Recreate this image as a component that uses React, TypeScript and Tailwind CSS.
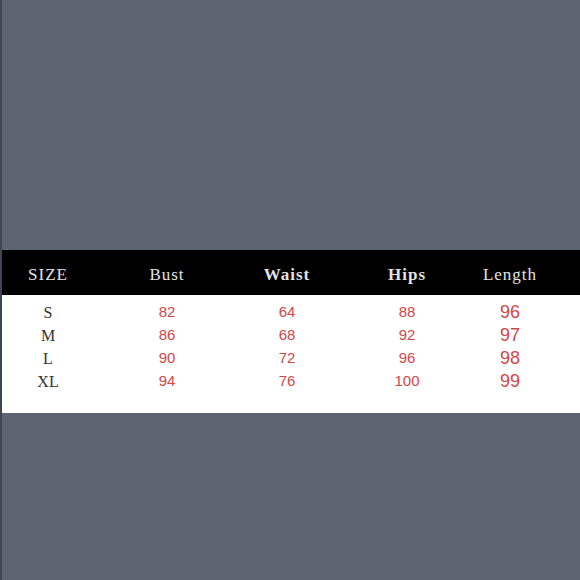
const heads = [
  { label: "SIZE", bold: false },
  { label: "Bust", bold: false },
  { label: "Waist", bold: true },
  { label: "Hips", bold: true },
  { label: "Length", bold: false },
];

const rows = [
  ["S", "82", "64", "88", "96"],
  ["M", "86", "68", "92", "97"],
  ["L", "90", "72", "96", "98"],
  ["XL", "94", "76", "100", "99"],
];

const cols = "grid grid-cols-[92px_146px_94px_146px_60px]";

export default function App() {
  return (
    <div className="w-[580px] h-[580px] bg-[#5b6470] flex flex-col border-l-2 border-[#3d4752]">
      <div className="h-[250px]" />
      <div className={`${cols} h-[45px] bg-black items-center pt-[5px] text-[17px] tracking-[1px] text-[#e4e4e4] font-['Liberation_Serif',serif]`}>
        {heads.map((h) => (
          <div key={h.label} className={`text-center ${h.bold ? "font-bold" : ""}`}>
            {h.label}
          </div>
        ))}
      </div>
      <div className="h-[118px] bg-white pt-[4px]">
        {rows.map((r) => (
          <div key={r[0]} className={`${cols} h-[23px] items-center`}>
            <div className="text-center text-[16px] text-[#333] font-['Liberation_Serif',serif]">
              {r[0]}
            </div>
            {r.slice(1).map((v, i) => (
              <div
                key={i}
                className={`text-center text-[#d0474a] font-['Liberation_Sans',sans-serif] ${
                  i === 3 ? "text-[18px]" : "text-[15px]"
                }`}
              >
                {v}
              </div>
            ))}
          </div>
        ))}
      </div>
    </div>
  );
}
